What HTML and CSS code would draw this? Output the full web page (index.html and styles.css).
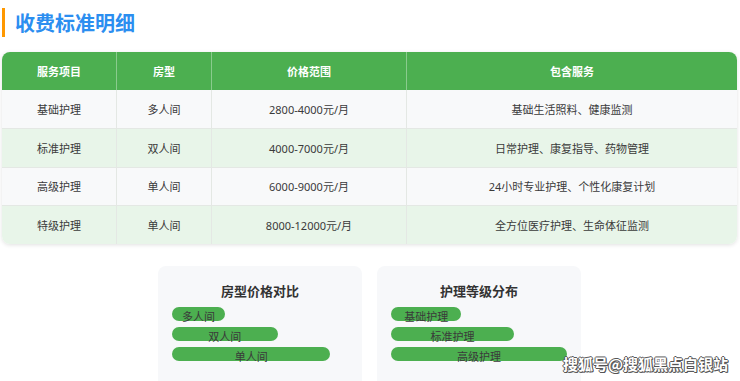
FILE: index.html
```html
<!DOCTYPE html>
<html lang="zh">
<head>
<meta charset="utf-8">
<link rel="stylesheet" href="styles.css">
</head>
<body>
<div class="page">
  <h2 class="title">收费标准明细</h2>
  <table class="fees">
    <colgroup>
      <col class="c1"><col class="c2"><col class="c3"><col class="c4">
    </colgroup>
    <thead>
      <tr><th>服务项目</th><th>房型</th><th>价格范围</th><th>包含服务</th></tr>
    </thead>
    <tbody>
      <tr><td>基础护理</td><td>多人间</td><td>2800-4000元/月</td><td>基础生活照料、健康监测</td></tr>
      <tr><td>标准护理</td><td>双人间</td><td>4000-7000元/月</td><td>日常护理、康复指导、药物管理</td></tr>
      <tr><td>高级护理</td><td>单人间</td><td>6000-9000元/月</td><td>24小时专业护理、个性化康复计划</td></tr>
      <tr><td>特级护理</td><td>单人间</td><td>8000-12000元/月</td><td>全方位医疗护理、生命体征监测</td></tr>
    </tbody>
  </table>
  <div class="charts">
    <div class="card">
      <h3 class="card-title">房型价格对比</h3>
      <div class="bar" style="width:30%">多人间</div>
      <div class="bar" style="width:60%">双人间</div>
      <div class="bar" style="width:90%">单人间</div>
    </div>
    <div class="card">
      <h3 class="card-title">护理等级分布</h3>
      <div class="bar" style="width:40%">基础护理</div>
      <div class="bar" style="width:70%">标准护理</div>
      <div class="bar" style="width:100%">高级护理</div>
    </div>
  </div>
  <div class="watermark">搜狐号@搜狐黑点白银站</div>
</div>
</body>
</html>
```
FILE: styles.css
```css
html, body {
  margin: 0;
  padding: 0;
  background: #ffffff;
}
body {
  font-family: "Noto Sans", "Noto Sans CJK SC", sans-serif;
  color: #333333;
  width: 740px;
  height: 381px;
  overflow: hidden;
}
.page {
  position: relative;
  padding: 8px 3px 0 2px;
  height: 373px;
}
.title {
  margin: 0;
  border-left: 3px solid #ff9800;
  padding-left: 10px;
  font-family: "Noto Sans CJK SC", sans-serif;
  font-size: 20px;
  line-height: 29px;
  font-weight: 700;
  color: #2b8ef0;
}
.fees {
  margin-top: 15px;
  width: 735px;
  border-collapse: separate;
  border-spacing: 0;
  border-radius: 8px;
  overflow: hidden;
  box-shadow: 0 1px 4px rgba(0,0,0,0.12);
  table-layout: fixed;
  font-size: 11px;
}
.c1 { width: 114px; }
.c2 { width: 95px; }
.c3 { width: 195px; }
.c4 { width: auto; }
.fees th {
  background: #4caf50;
  color: #ffffff;
  font-weight: 700;
  height: 38px;
  padding: 0;
  border-left: 1px solid rgba(255,255,255,0.35);
}
.fees th:first-child, .fees td:first-child { border-left: none; }
.fees td {
  text-align: center;
  height: 37.5px;
  padding: 0;
  border-top: 1px solid #e4e8e4;
  border-left: 1px solid #e4e8e4;
  color: #3a3a3a;
}
.fees tbody tr:first-child td { border-top: none; height: 38px; }
.fees tbody tr:nth-child(odd) td { background: #f8f9fa; }
.fees tbody tr:nth-child(even) td { background: #e8f5e9; }
.charts {
  margin-top: 22px;
  display: flex;
  justify-content: center;
  gap: 15px;
}
.card {
  width: 204px;
  box-sizing: border-box;
  background: #f7f8fa;
  border-radius: 8px;
  padding: 16px 14px 20px;
  height: 130px;
}
.card-title {
  margin: 0 0 7px;
  text-align: center;
  font-family: "Noto Sans CJK SC", sans-serif;
  font-size: 13px;
  line-height: 18px;
  font-weight: 700;
  color: #333333;
}
.bar {
  background: #4caf50;
  height: 14px;
  line-height: 20px;
  border-radius: 7px;
  margin-bottom: 6px;
  font-size: 11px;
  text-align: center;
  color: #3a3a3a;
  white-space: nowrap;
}
.watermark {
  position: absolute;
  left: 563px;
  top: 354px;
  font-family: "Noto Sans CJK SC", sans-serif;
  font-size: 15px;
  line-height: 20px;
  font-weight: 700;
  color: #ffffff;
  text-shadow: -1px 0 #555, 1px 0 #555, 0 -1px #555, 0 1px #555, 1px 1px #555;
}
```
